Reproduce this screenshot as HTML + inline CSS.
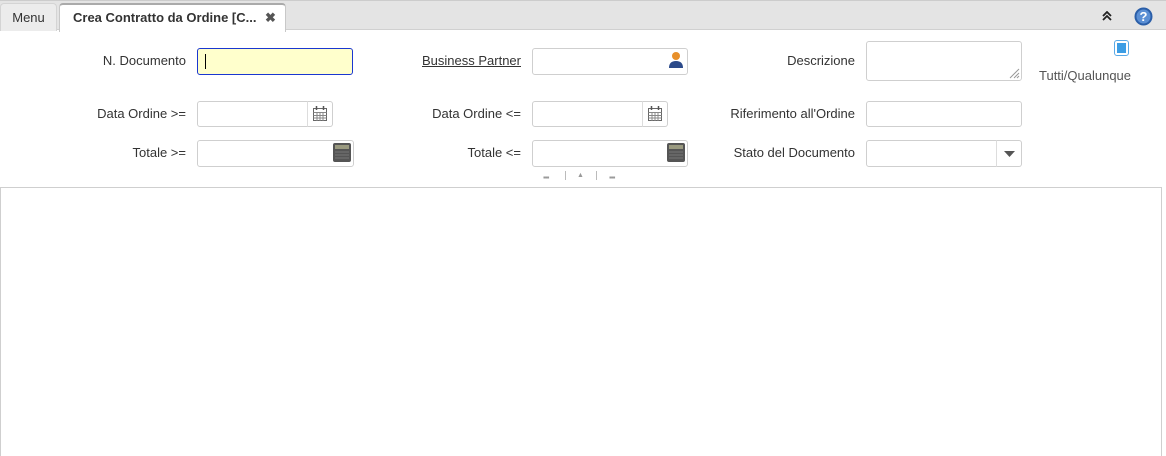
<!DOCTYPE html>
<html style="overflow:hidden;height:456px"><head><style>
body{margin:0;width:1166px;height:456px;overflow:hidden;background:#fff;font-family:"Liberation Sans",sans-serif;font-size:13px;color:#333;position:relative}
.a{position:absolute}
.lbl{position:absolute;text-align:right;width:200px;line-height:16px}
.in{position:absolute;border:1px solid #cfcfcf;border-radius:3px;background:#fff;box-sizing:border-box}
.btn{position:absolute;border:1px solid #cfcfcf;border-left:1px solid #ddd;border-radius:0 3px 3px 0;background:#fff;box-sizing:border-box}
</style></head><body>
<div class="a" style="left:0;top:0;width:1166px;height:30px;background:#e4e4e4;border-bottom:1px solid #d0d0d0;border-top:1px solid #ccc;box-sizing:border-box"></div>
<div class="a" style="left:0;top:3px;width:57px;height:28px;background:#ececec;border:1px solid #d4d4d4;border-bottom:none;border-radius:4px 4px 0 0;box-sizing:border-box;text-align:center;line-height:27px;color:#333">Menu</div>
<div class="a" style="left:59px;top:3px;width:227px;height:29px;background:#fff;border:1px solid #c8c8c8;border-top:2px solid #aaa;border-bottom:none;border-radius:4px 4px 0 0;box-sizing:border-box;line-height:26px;font-weight:bold;color:#333;padding-left:13px">Crea Contratto da Ordine [C...<span style="position:absolute;left:205px;color:#555">✖</span></div>
<svg class="a" style="left:1102px;top:11px" width="10" height="10" viewBox="0 0 10 10"><path d="M1 5L5 1L9 5M1 9L5 5L9 9" stroke="#222" stroke-width="1.8" fill="none"/></svg>
<svg class="a" style="left:1134px;top:7px" width="19" height="19" viewBox="0 0 19 19"><circle cx="9.5" cy="9.5" r="9" fill="#2a5ea8"/><circle cx="9.5" cy="9.5" r="7" fill="#5b8fd4"/><text x="9.5" y="14" font-size="13" font-weight="bold" fill="#fff" text-anchor="middle" font-family="Liberation Sans">?</text></svg>

<div class="lbl" style="left:-14px;top:53px">N. Documento</div>
<div class="in" style="left:197px;top:48px;width:156px;height:27px;background:#ffffcc;border-color:#1a37d0"><div class="a" style="left:7px;top:5px;width:1px;height:15px;background:#000"></div></div>
<div class="lbl" style="left:321px;top:53px;text-decoration:underline">Business Partner</div>
<div class="in" style="left:532px;top:48px;width:156px;height:27px"></div>
<svg class="a" style="left:668px;top:51px" width="16" height="18" viewBox="0 0 16 18"><circle cx="8" cy="5" r="4" fill="#e8902a"/><path d="M1 17 Q1 10 8 10 Q15 10 15 17Z" fill="#2b4a8a"/></svg>
<div class="lbl" style="left:655px;top:53px">Descrizione</div>
<div class="in" style="left:866px;top:41px;width:156px;height:40px"><svg class="a" style="right:1px;bottom:1px" width="12" height="12"><path d="M11 2L2 11M11 6L6 11M11 9L9 11" stroke="#999"/></svg></div>
<div class="a" style="left:1114px;top:40px;width:15px;height:16px;border:1px solid #5aa9e6;border-radius:3px;box-sizing:border-box;background:#fff"><div class="a" style="left:2px;top:2px;width:9px;height:10px;background:#3c9de4"></div></div>
<div class="a" style="left:1039px;top:68px;color:#555">Tutti/Qualunque</div>

<div class="lbl" style="left:-14px;top:106px">Data Ordine &gt;=</div>
<div class="in" style="left:197px;top:101px;width:111px;height:26px;border-radius:3px 0 0 3px"></div>
<div class="btn" style="left:307px;top:101px;width:26px;height:26px"></div>
<svg class="a" style="left:313px;top:106px" width="14" height="15" viewBox="0 0 14 15"><rect x="0.5" y="2.5" width="13" height="12" fill="#fff" stroke="#666"/><path d="M0.5 6.5H13.5M0.5 9.5H13.5M0.5 12H13.5M4 6V15M7 6V15M10 6V15" stroke="#888"/><path d="M3.5 0V4M10.5 0V4" stroke="#555" stroke-width="1.5"/></svg>
<div class="lbl" style="left:321px;top:106px">Data Ordine &lt;=</div>
<div class="in" style="left:532px;top:101px;width:111px;height:26px;border-radius:3px 0 0 3px"></div>
<div class="btn" style="left:642px;top:101px;width:26px;height:26px"></div>
<svg class="a" style="left:648px;top:106px" width="14" height="15" viewBox="0 0 14 15"><rect x="0.5" y="2.5" width="13" height="12" fill="#fff" stroke="#666"/><path d="M0.5 6.5H13.5M0.5 9.5H13.5M0.5 12H13.5M4 6V15M7 6V15M10 6V15" stroke="#888"/><path d="M3.5 0V4M10.5 0V4" stroke="#555" stroke-width="1.5"/></svg>
<div class="lbl" style="left:655px;top:106px">Riferimento all'Ordine</div>
<div class="in" style="left:866px;top:101px;width:156px;height:26px"></div>

<div class="lbl" style="left:-14px;top:145px">Totale &gt;=</div>
<div class="in" style="left:197px;top:140px;width:157px;height:27px"></div>
<svg class="a" style="left:333px;top:143px" width="18" height="19" viewBox="0 0 18 19"><rect width="18" height="19" rx="2" fill="#555"/><rect x="2" y="2" width="14" height="4" fill="#9a9a80"/><path d="M2 9H16M2 12H16M2 15H16" stroke="#777"/></svg>
<div class="lbl" style="left:321px;top:145px">Totale &lt;=</div>
<div class="in" style="left:532px;top:140px;width:156px;height:27px"></div>
<svg class="a" style="left:667px;top:143px" width="18" height="19" viewBox="0 0 18 19"><rect width="18" height="19" rx="2" fill="#555"/><rect x="2" y="2" width="14" height="4" fill="#9a9a80"/><path d="M2 9H16M2 12H16M2 15H16" stroke="#777"/></svg>
<div class="lbl" style="left:655px;top:145px">Stato del Documento</div>
<div class="in" style="left:866px;top:140px;width:131px;height:27px;border-radius:3px 0 0 3px"></div>
<div class="btn" style="left:996px;top:140px;width:26px;height:27px"></div>
<svg class="a" style="left:1004px;top:151px" width="11" height="6"><path d="M0 0H11L5.5 6Z" fill="#555"/></svg>

<div class="a" style="left:543px;top:173px;font-size:8px;color:#999;letter-spacing:-1px">▪▪▪</div>
<div class="a" style="left:565px;top:171px;width:1px;height:9px;background:#bbb"></div>
<div class="a" style="left:577px;top:172px;font-size:7px;color:#999">▲</div>
<div class="a" style="left:596px;top:171px;width:1px;height:9px;background:#bbb"></div>
<div class="a" style="left:609px;top:173px;font-size:8px;color:#999;letter-spacing:-1px">▪▪▪</div>

<div class="a" style="left:0;top:187px;width:1162px;height:269px;border:1px solid #cfcfcf;border-bottom:none;box-sizing:border-box"></div>
</body></html>
